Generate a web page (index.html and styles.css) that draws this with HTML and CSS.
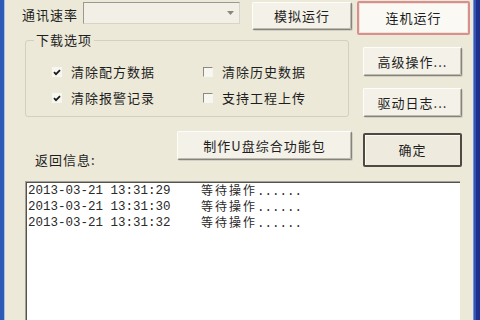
FILE: index.html
```html
<!DOCTYPE html>
<html lang="zh">
<head>
<meta charset="utf-8">
<link rel="stylesheet" href="styles.css">
</head>
<body>
<div class="window">
  <div class="frame-l"></div>
  <div class="client">
    <div class="upper">
      <div class="left-col">
        <div class="row1">
          <span class="lbl rate-lbl">通讯速率</span>
          <div class="combo"><svg class="arrow" width="7" height="4" viewBox="0 0 7 4"><path d="M0 0H7L3.5 4Z" fill="#8a887e"/></svg></div>
          <button class="btn btn-sim">模拟运行</button>
        </div>
        <fieldset class="group">
          <legend class="lbl">下载选项</legend>
          <div class="checks">
            <label class="chk"><span class="box on"><svg width="8" height="7" viewBox="0 0 8 7"><path d="M1 3.2L3 5.2L7 1.2" fill="none" stroke="#1a1a1a" stroke-width="1.8"/></svg></span><span class="lbl">清除配方数据</span></label>
            <label class="chk"><span class="box"></span><span class="lbl">清除历史数据</span></label>
            <label class="chk"><span class="box on"><svg width="8" height="7" viewBox="0 0 8 7"><path d="M1 3.2L3 5.2L7 1.2" fill="none" stroke="#1a1a1a" stroke-width="1.8"/></svg></span><span class="lbl">清除报警记录</span></label>
            <label class="chk"><span class="box"></span><span class="lbl">支持工程上传</span></label>
          </div>
        </fieldset>
        <div class="row3">
          <span class="lbl ret-lbl">返回信息:</span>
          <button class="btn btn-usb">制作U盘综合功能包</button>
        </div>
      </div>
      <div class="right-col">
        <button class="btn btn-online">连机运行</button>
        <button class="btn btn-side">高级操作...</button>
        <button class="btn btn-side">驱动日志...</button>
        <button class="btn btn-ok">确定</button>
      </div>
    </div>
    <div class="log">
      <div class="line"><span class="ts">2013-03-21 13:31:29</span><span class="msg">等待操作<span class="dots">......</span></span></div>
      <div class="line"><span class="ts">2013-03-21 13:31:30</span><span class="msg">等待操作<span class="dots">......</span></span></div>
      <div class="line"><span class="ts">2013-03-21 13:31:32</span><span class="msg">等待操作<span class="dots">......</span></span></div>
    </div>
  </div>
  <div class="frame-r"></div>
</div>
</body>
</html>
```

FILE: styles.css
```css
html, body {
  margin: 0;
  padding: 0;
}
body {
  width: 480px;
  height: 320px;
  overflow: hidden;
  background: #ECE9D8;
  font-family: "Noto Sans CJK SC", "Liberation Sans", sans-serif;
  color: #1e1e1e;
}
.window {
  display: flex;
  height: 320px;
}
.frame-l {
  width: 5px;
  background: linear-gradient(to right, #2D5BB5 0, #2D5BB5 4px, #A9C0E8 4px);
}
.frame-r {
  width: 7px;
  background: linear-gradient(to right, #7090DA 0, #7090DA 1px, #3554B4 1px, #3554B4 3px, #1F2F8C 3px);
}
.client {
  flex: 1;
  display: flex;
  flex-direction: column;
  background: #ECE9D8;
}
.lbl {
  font-size: 13px;
  letter-spacing: 1px;
  line-height: 16px;
  white-space: nowrap;
}
.upper {
  display: flex;
}
.left-col {
  width: 347px;
  display: flex;
  flex-direction: column;
}
.row1 {
  display: flex;
  align-items: flex-start;
  margin-top: 2px;
  height: 28px;
}
.rate-lbl {
  margin-left: 17px;
  padding-top: 5px;
  width: 56px;
}
.combo {
  margin-left: 5px;
  width: 157px;
  height: 22px;
  box-sizing: border-box;
  border: 1px solid;
  border-color: #9b998e #d8d5c6 #d8d5c6 #9b998e;
  background: #F1EFE6;
  display: flex;
  align-items: center;
  justify-content: flex-end;
  padding-right: 5px;
}
.btn {
  font-family: "Noto Sans CJK SC", "Liberation Sans", sans-serif;
  font-size: 13px;
  letter-spacing: 1px;
  line-height: 16px;
  color: #1e1e1e;
  padding: 0;
  box-sizing: border-box;
  background: #F3F1E8;
  border: 1px solid;
  border-color: #fdfdfa #86847a #86847a #fdfdfa;
  box-shadow: inset -1px -1px 0 #bdbbb0, 1px 1px 0 #d2d0c4;
  border-radius: 2px;
}
.btn-sim {
  margin-left: 12px;
  width: 100px;
  height: 28px;
}
.group {
  margin: 2px 0 0 20px;
  width: 324px;
  box-sizing: border-box;
  border: 1px solid #D3D0C0;
  border-radius: 3px;
  padding: 15px 0 9px 8px;
  min-width: 0;
}
.group legend {
  padding: 0 2px;
}
.checks {
  margin-left: 18px;
  display: grid;
  grid-template-columns: 151px auto;
  grid-auto-rows: 18px;
  row-gap: 8px;
}
.chk {
  display: flex;
  align-items: center;
  height: 18px;
}
.box {
  width: 10px;
  height: 10px;
  box-sizing: border-box;
  border: 1px solid;
  border-color: #8c8a80 #f6f5ef #f6f5ef #8c8a80;
  background: #F7F6F0;
  margin-right: 9px;
  display: flex;
  align-items: center;
  justify-content: center;
}
.box.on {
  border-color: #F7F6F0;
  background: #F7F6F0;
}
.row3 {
  margin-top: 14px;
  height: 37px;
  display: flex;
  justify-content: space-between;
  padding: 0 0 0 30px;
}
.ret-lbl {
  align-self: flex-end;
  padding-bottom: 0;
}
.btn-usb {
  width: 175px;
  height: 29px;
}
.right-col {
  flex: 1;
  display: flex;
  flex-direction: column;
  align-items: flex-start;
}
.btn-online {
  margin: 1px 0 0 5px;
  width: 113px;
  height: 34px;
  border: 2px solid #DC8E8E;
  border-radius: 2px;
  background: #FAF9F4;
  box-shadow: inset 0 0 0 1px #E9E6DA;
}
.btn-side {
  margin: 12px 0 0 11px;
  width: 99px;
  height: 29px;
}
.btn-ok {
  margin: 16px 0 0 11px;
  width: 99px;
  height: 34px;
  border: 2px solid #4C4A42;
  border-radius: 2px;
  background: #EEEBDE;
  box-shadow: inset 1px 1px 0 #fbfaf4;
}
.log {
  flex: 1;
  margin: 13px 13px 0 20px;
  background: #FFFFFF;
  border-top: 1px solid #A4A298;
  border-left: 1px solid #A4A298;
  box-shadow: inset 1px 1px 0 #55534c;
  padding: 1px 0 0 2px;
}
.line {
  display: flex;
  height: 16px;
  align-items: center;
  color: #2a2a2a;
}
.ts {
  font-family: "Liberation Mono", monospace;
  font-size: 12.5px;
  line-height: 15px;
  width: 173px;
  white-space: nowrap;
}
.msg {
  font-family: "Noto Sans CJK SC", sans-serif;
  font-size: 12px;
  line-height: 14px;
  letter-spacing: 2px;
  white-space: nowrap;
}
.dots {
  font-family: "Liberation Mono", monospace;
  font-size: 12.5px;
  line-height: 14px;
  letter-spacing: 0;
}
```
